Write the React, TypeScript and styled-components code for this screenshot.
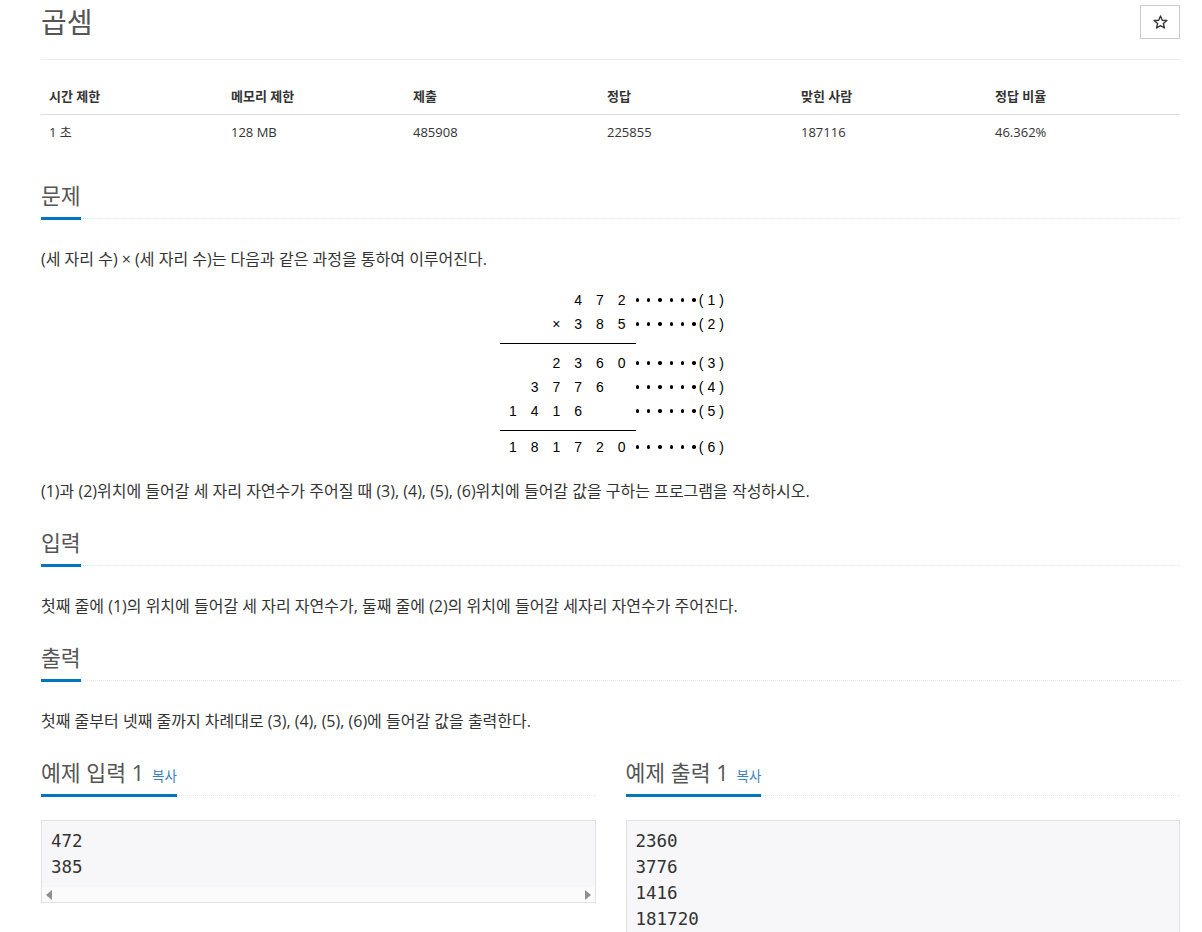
import React from 'react';
import styled, { createGlobalStyle } from 'styled-components';

const GlobalStyle = createGlobalStyle`
  html, body {
    margin: 0;
    padding: 0;
    background: #fff;
    overflow: hidden;
  }
  body {
    font-family: "Open Sans", "Noto Sans CJK KR", sans-serif;
    color: #333;
    font-size: 14px;
  }
`;

const Page = styled.div`
  width: 1139px;
  padding-left: 41px;
`;

const Header = styled.div`
  display: flex;
  justify-content: space-between;
  align-items: flex-start;
  padding: 5px 0 20px;
  border-bottom: 1px solid #eee;
`;

const Title = styled.h1`
  margin: 0;
  font-size: 28px;
  line-height: 34px;
  font-weight: 400;
  color: #555;
`;

const StarButton = styled.button`
  width: 40px;
  height: 34px;
  padding: 0;
  border: 1px solid #ccc;
  background: #fff;
  display: flex;
  align-items: center;
  justify-content: center;
  cursor: pointer;
`;

const InfoTable = styled.table`
  width: 100%;
  margin-top: 18px;
  border-collapse: collapse;
  table-layout: fixed;
  font-size: 13px;
`;

const Col = styled.col<{ $w: number }>`
  width: ${(p) => p.$w}px;
`;

const Th = styled.th`
  text-align: left;
  font-weight: 700;
  padding: 8px;
  line-height: 20px;
  border-bottom: 1px solid #ddd;
`;

const Td = styled.td`
  padding: 7px 8px 8px;
  line-height: 20px;
`;

const Section = styled.section<{ $top?: number }>`
  margin-top: ${(p) => p.$top ?? 30}px;
`;

const Headline = styled.div<{ $gap?: number }>`
  display: flex;
  border-bottom: 1px dotted #e5e5e5;
  margin-bottom: ${(p) => p.$gap ?? 29}px;
`;

const HeadlineTitle = styled.h2`
  margin: 0 0 -2px;
  padding-bottom: 10px;
  border-bottom: 3px solid #0076c0;
  font-size: 21.6px;
  line-height: 22px;
  height: 22px;
  font-weight: 400;
  color: #555;
  white-space: nowrap;
`;

const CopyLink = styled.a`
  margin-left: 8px;
  font-size: 13.5px;
  line-height: 1;
  color: #3b82c4;
  text-decoration: none;
  cursor: pointer;
`;

const ProblemText = styled.p`
  margin: 0;
  font-size: 16px;
  line-height: 22px;
`;

const FigureWrap = styled.div`
  display: flex;
  justify-content: center;
  padding-left: 7px;
  margin: 18px 0 21px;
`;

const Figure = styled.div`
  width: 228px;
  font-family: "Liberation Sans", sans-serif;
  font-size: 14px;
  color: #000;
`;

const FigRow = styled.div`
  display: flex;
  align-items: center;
  height: 24px;
  padding-left: 2px;
`;

const Digit = styled.span`
  width: 22.5px;
  text-align: center;
`;

const Dots = styled.span`
  display: flex;
  gap: 8px;
  margin-left: 3px;
`;

const Dot = styled.i`
  width: 3.4px;
  height: 3.4px;
  border-radius: 50%;
  background: #000;
`;

const Label = styled.span`
  margin-left: 3px;
  letter-spacing: 4px;
`;

const Rule = styled.div<{ $below: number }>`
  width: 136px;
  height: 1px;
  background: #000;
  margin: 7px 0 ${(p) => p.$below}px;
`;

const SampleGrid = styled.div`
  display: grid;
  grid-template-columns: 1fr 1fr;
  column-gap: 30px;
`;

const SampleBox = styled.div`
  border: 1px solid #e1e1e8;
  background: #f7f7f9;
`;

const SampleData = styled.pre`
  margin: 0;
  padding: 7px 9px;
  font-family: "DejaVu Sans Mono", monospace;
  font-size: 17.5px;
  line-height: 26px;
  color: #333;
`;

const ScrollTrack = styled.div`
  display: flex;
  justify-content: space-between;
  align-items: center;
  height: 15px;
  padding: 0 4px;
  background: #fbfbfb;
`;

const Arrow = styled.span<{ $dir: 'left' | 'right' }>`
  width: 0;
  height: 0;
  border-top: 5px solid transparent;
  border-bottom: 5px solid transparent;
  ${(p) =>
    p.$dir === 'left'
      ? 'border-right: 6px solid #8f8f8f;'
      : 'border-left: 6px solid #8f8f8f;'}
`;

const limits = [
  { title: '시간 제한', value: '1 초', w: 182 },
  { title: '메모리 제한', value: '128 MB', w: 182 },
  { title: '제출', value: '485908', w: 194 },
  { title: '정답', value: '225855', w: 194 },
  { title: '맞힌 사람', value: '187116', w: 194 },
  { title: '정답 비율', value: '46.362%', w: 193 },
];

const StarIcon = () => (
  <svg width="15" height="14" viewBox="0 0 24 23">
    <polygon
      points="12,1.5 14.9,8.6 22.5,9.1 16.7,14 18.5,21.4 12,17.4 5.5,21.4 7.3,14 1.5,9.1 9.1,8.6"
      fill="none"
      stroke="#333"
      strokeWidth="2.2"
      strokeLinejoin="round"
    />
  </svg>
);

const figRow = (cells: string[], label: string) => (
  <FigRow>
    {cells.map((c, i) => (
      <Digit key={i}>{c}</Digit>
    ))}
    <Dots>
      {[0, 1, 2, 3, 4, 5].map((i) => (
        <Dot key={i} />
      ))}
    </Dots>
    <Label>{label}</Label>
  </FigRow>
);

const Multiplication = () => (
  <FigureWrap>
    <Figure>
      {figRow(['', '', '', '4', '7', '2'], '(1)')}
      {figRow(['', '', '×', '3', '8', '5'], '(2)')}
      <Rule $below={7} />
      {figRow(['', '', '2', '3', '6', '0'], '(3)')}
      {figRow(['', '3', '7', '7', '6', ''], '(4)')}
      {figRow(['1', '4', '1', '6', '', ''], '(5)')}
      <Rule $below={4} />
      {figRow(['1', '8', '1', '7', '2', '0'], '(6)')}
    </Figure>
  </FigureWrap>
);

const Sample = ({ title, data }: { title: string; data: string }) => (
  <Section>
    <Headline $gap={24}>
      <HeadlineTitle>
        {title}
        <CopyLink>복사</CopyLink>
      </HeadlineTitle>
    </Headline>
    <SampleBox>
      <SampleData>{data}</SampleData>
      <ScrollTrack>
        <Arrow $dir="left" />
        <Arrow $dir="right" />
      </ScrollTrack>
    </SampleBox>
  </Section>
);

const App: React.FC = () => (
  <Page>
    <GlobalStyle />
    <Header>
      <Title>곱셈</Title>
      <StarButton>
        <StarIcon />
      </StarButton>
    </Header>

    <InfoTable>
      <colgroup>
        {limits.map((l) => (
          <Col key={l.title} $w={l.w} />
        ))}
      </colgroup>
      <thead>
        <tr>
          {limits.map((l) => (
            <Th key={l.title}>{l.title}</Th>
          ))}
        </tr>
      </thead>
      <tbody>
        <tr>
          {limits.map((l) => (
            <Td key={l.title}>{l.value}</Td>
          ))}
        </tr>
      </tbody>
    </InfoTable>

    <Section $top={35}>
      <Headline>
        <HeadlineTitle>문제</HeadlineTitle>
      </Headline>
      <ProblemText>(세 자리 수) × (세 자리 수)는 다음과 같은 과정을 통하여 이루어진다.</ProblemText>
      <Multiplication />
      <ProblemText>
        (1)과 (2)위치에 들어갈 세 자리 자연수가 주어질 때 (3), (4), (5), (6)위치에 들어갈 값을 구하는 프로그램을 작성하시오.
      </ProblemText>
    </Section>

    <Section>
      <Headline>
        <HeadlineTitle>입력</HeadlineTitle>
      </Headline>
      <ProblemText>
        첫째 줄에 (1)의 위치에 들어갈 세 자리 자연수가, 둘째 줄에 (2)의 위치에 들어갈 세자리 자연수가 주어진다.
      </ProblemText>
    </Section>

    <Section>
      <Headline>
        <HeadlineTitle>출력</HeadlineTitle>
      </Headline>
      <ProblemText>첫째 줄부터 넷째 줄까지 차례대로 (3), (4), (5), (6)에 들어갈 값을 출력한다.</ProblemText>
    </Section>

    <SampleGrid>
      <Sample title="예제 입력 1" data={'472\n385'} />
      <Sample title="예제 출력 1" data={'2360\n3776\n1416\n181720'} />
    </SampleGrid>
  </Page>
);

export default App;
